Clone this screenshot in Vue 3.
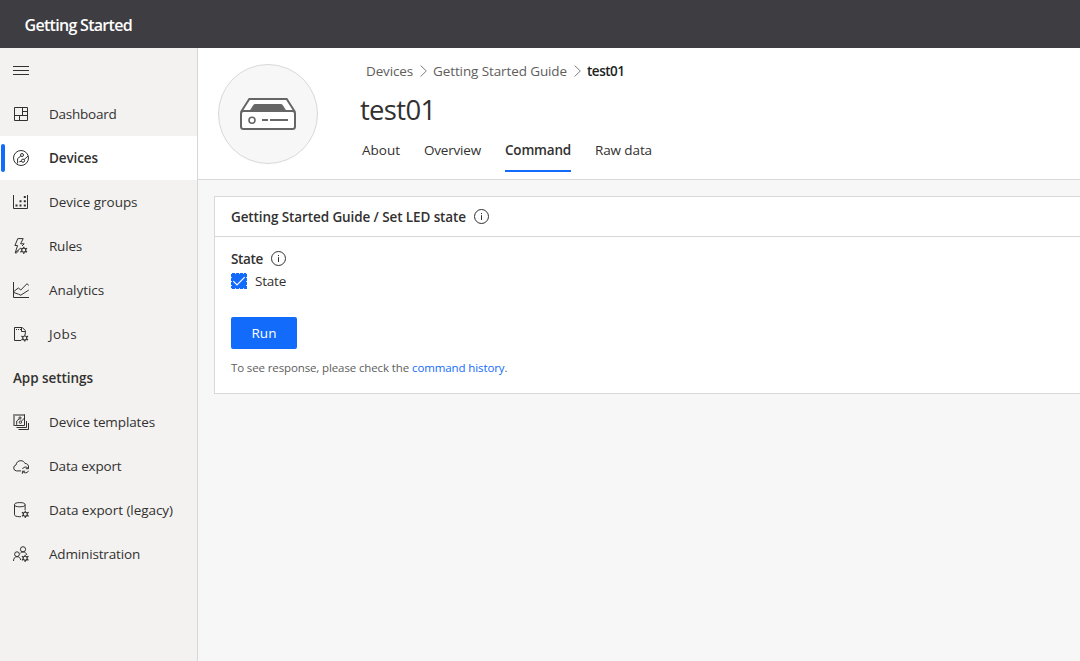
<script setup>
const nav = [
  { label: 'Dashboard', width: 67.5, icon: 'dashboard' },
  { label: 'Devices', width: 49, icon: 'devices', active: true },
  { label: 'Device groups', width: 88.5, icon: 'groups' },
  { label: 'Rules', width: 33, icon: 'rules' },
  { label: 'Analytics', width: 55, icon: 'analytics' },
  { label: 'Jobs', width: 28, icon: 'jobs' },
  { label: 'App settings', width: 80, heading: true },
  { label: 'Device templates', width: 106, icon: 'templates' },
  { label: 'Data export', width: 72.5, icon: 'export' },
  { label: 'Data export (legacy)', width: 124, icon: 'legacy' },
  { label: 'Administration', width: 91, icon: 'admin' },
]

const tabs = [
  { label: 'About', width: 38 },
  { label: 'Overview', width: 57 },
  { label: 'Command', width: 66, active: true },
  { label: 'Raw data', width: 57 },
]

// Tracks a label so that it fills the given width in pixels.
const vFit = {
  mounted(el, { value }) {
    el.style.display = 'inline-block'
    el.style.whiteSpace = 'nowrap'
    const natural = el.getBoundingClientRect().width
    el.style.letterSpacing = (value - natural) / el.textContent.length + 'px'
    el.style.width = value + 'px'
  },
}
</script>

<template>
  <div class="app">
    <svg class="defs" width="0" height="0" aria-hidden="true">
      <symbol id="gear" viewBox="0 0 7 7">
        <circle cx="3.5" cy="3.5" r="1.9" fill="none" stroke="currentColor" stroke-width="1.1" />
        <path d="M3.5 0v1.4M3.5 5.6V7M.3 1.65l1.4.8M5.3 4.55l1.4.8M.3 5.35l1.4-.8M5.3 2.45l1.4-.8" fill="none" stroke="currentColor" stroke-width="1.1" />
      </symbol>
    </svg>

    <header class="topbar"><span v-fit="107.5">Getting Started</span></header>

    <div class="body">
      <nav class="sidebar">
        <div class="row">
          <svg class="icon" viewBox="0 0 16 16"><path d="M0 4.5h16M0 8.5h16M0 12.5h16" /></svg>
        </div>
        <div v-for="item in nav" :key="item.label" class="row" :class="{ active: item.active, heading: item.heading }">
          <svg v-if="!item.heading" class="icon" viewBox="0 0 16 16">
            <g v-if="item.icon === 'dashboard'">
              <path d="M1.500 1.500h13v13h-13zM9.500 1.500v8M1.500 9.500h13M9.500 5.500h5M6.500 9.500v5" />
            </g>
            <g v-else-if="item.icon === 'devices'">
              <circle cx="8" cy="8" r="7.500" />
              <circle cx="9" cy="5" r="1.500" />
              <circle cx="10" cy="10.700" r="1.600" />
              <path d="M7.800 6L4.600 8.600v4.900M11.100 9.500l3.900-3.400M8.600 11.300l-2.300.4" />
            </g>
            <g v-else-if="item.icon === 'groups'">
              <path d="M.5 1v13.500h14V1" />
              <path class="solid" d="M2.500 10.500h2v2h-2zM6.500 10.500h2v2h-2zM10.800 10.500h2v2h-2zM6.500 6.300h2v2h-2zM10.800 6.300h2v2h-2zM10.800 2h2v2h-2z" />
            </g>
            <g v-else-if="item.icon === 'rules'">
              <path d="M4.800.6h5.400L7.600 5.800h3.600L9 8M4.800.6L1.900 7.500h2.700L2.200 14.900l5.100-4.600" />
              <path d="M2.200 14.900h1.300l2.300-2.200" />
              <use href="#gear" x="7" y="8.400" width="7.500" height="7.500" />
            </g>
            <g v-else-if="item.icon === 'analytics'">
              <path d="M.5 0v15.500H16M.8 9.500L5.300 6l2.500 2L14 1.700l2 2M.8 10.500l4.700 1.700 2.300 1L15.800 8" />
            </g>
            <g v-else-if="item.icon === 'jobs'">
              <path d="M8 14.500H1.500v-13h7.800l3 3v4M8.500 1.500v4h3.800M3 3.500h1M5 3.500h1M7 3.500h1" />
              <use href="#gear" x="8" y="8.300" width="7.500" height="7.500" />
            </g>
            <g v-else-if="item.icon === 'templates'">
              <path class="grey" d="M0 1h12M1 0v12" />
              <path d="M1.500 11.500h10v-11M3.500 13.500h10V7M5.500 15.500h10V9" />
              <circle cx="7" cy="4" r="1.100" /><circle cx="7.400" cy="8.200" r="1.200" />
              <path d="M6 5L3.700 7v3.800M8.300 7.200l2.700-2.600" />
            </g>
            <g v-else-if="item.icon === 'export'">
              <path d="M8 12.900H3.400a3 3 0 0 1-.4-5.900c.4-2.700 2.200-4.300 4.800-4.300 2 0 3.400 1 4.200 2.800 2 0 3.300 1 3.400 2.700" />
              <path d="M9.500 11a3.200 3.200 0 0 1 5.600-.6M15.500 8v2.700h-2.700M15.500 12.800a3.200 3.200 0 0 1-5.700.6M9.400 15.800v-2.600h2.700" />
            </g>
            <g v-else-if="item.icon === 'legacy'">
              <ellipse cx="6.800" cy="2.700" rx="5.300" ry="2.100" />
              <path d="M1.500 2.700v10c0 1.200 1.900 1.900 4.800 2H8M12.100 2.700v5.500" />
              <use href="#gear" x="8.500" y="8.500" width="7.500" height="7.500" />
            </g>
            <g v-else-if="item.icon === 'admin'">
              <circle cx="10" cy="3.300" r="2.600" />
              <circle cx="4" cy="8.200" r="2.400" />
              <path d="M.5 15c0-2.700 1.300-4.300 3.500-4.300S7.400 12 7.700 14M7.400 7.200c.8-.9 1.600-1.300 2.600-1.300 2 0 3.300 1.100 3.800 3" />
              <use href="#gear" x="8.400" y="8.500" width="7.500" height="7.500" />
            </g>
          </svg>
          <span v-fit="item.width">{{ item.label }}</span>
        </div>
      </nav>

      <main class="main">
        <section class="hero">
          <div class="avatar">
            <svg width="56" height="32" viewBox="0 0 56 32">
              <path d="M1 14L9.300 1h37.400L55 14" fill="#fff" stroke="#666" stroke-width="2" />
              <path d="M15 6h26q1.500 0 2 1.500L46.500 13h-37L13 7.500Q13.500 6 15 6z" fill="#666" />
              <rect x="1" y="13" width="54" height="18" rx="2.500" fill="#fff" stroke="#666" stroke-width="2" />
              <circle cx="12" cy="22.300" r="3" fill="none" stroke="#666" stroke-width="1.600" />
              <path d="M22 22h6M30 22h18" stroke="#666" stroke-width="2" />
            </svg>
          </div>
          <div class="details">
            <div class="crumbs">
              <span v-fit="47">Devices</span>
              <svg class="chevron" width="7" height="12" viewBox="0 0 7 12"><path d="M.6.5L6.300 6 .6 11.500" /></svg>
              <span v-fit="134">Getting Started Guide</span>
              <svg class="chevron" width="7" height="12" viewBox="0 0 7 12"><path d="M.6.5L6.300 6 .6 11.500" /></svg>
              <b v-fit="37.500">test01</b>
            </div>
            <h1><span v-fit="75.500">test01</span></h1>
            <div class="tabs">
              <div v-for="tab in tabs" :key="tab.label" class="tab" :class="{ active: tab.active }">
                <span v-fit="tab.width">{{ tab.label }}</span>
              </div>
            </div>
          </div>
        </section>

        <section class="card">
          <div class="card-head">
            <span v-fit="235">Getting Started Guide / Set LED state</span>
            <svg class="info" viewBox="0 0 15 15"><circle cx="7.500" cy="7.500" r="7" /><path d="M7.500 6.200V11M7.500 4v1.100" /></svg>
          </div>
          <div class="card-body">
            <div class="field-label">
              <span v-fit="32">State</span>
              <svg class="info" viewBox="0 0 15 15"><circle cx="7.500" cy="7.500" r="7" /><path d="M7.500 6.200V11M7.500 4v1.100" /></svg>
            </div>
            <div class="check">
              <svg width="16" height="16" viewBox="0 0 16 16">
                <rect width="16" height="16" fill="#136bfb" />
                <path d="M0 .5h16M0 15.500h16M.5 0v16M15.500 0v16" fill="none" stroke="#fff" stroke-opacity=".8" stroke-dasharray="1 3" />
                <path d="M2.300 8.200l3.700 3.700 7.700-7.700" fill="none" stroke="#fff" stroke-width="1.200" />
              </svg>
              <span v-fit="31">State</span>
            </div>
            <button class="run"><span v-fit="25">Run</span></button>
            <p class="note"><span v-fit="178">To see response, please check the</span><a v-fit="92.500">command history</a><span>.</span></p>
          </div>
        </section>
      </main>
    </div>
  </div>
</template>

<style>
body { margin: 0; overflow: hidden; }
</style>

<style scoped>
.app {
  display: flex;
  flex-direction: column;
  width: 1080px;
  height: 661px;
  overflow: hidden;
  font: 13.5px/20px "Open Sans", "Noto Sans", sans-serif;
  color: #323130;
}
.app * { box-sizing: border-box; }
.defs { position: absolute; }
.topbar {
  display: flex;
  align-items: center;
  flex: none;
  height: 48px;
  padding: 2px 0 0 24.5px;
  background: #3e3d42;
  color: #fff;
  font-size: 16px;
  font-weight: 600;
}
.body { display: flex; flex: 1; min-height: 0; }
.sidebar {
  flex: none;
  width: 198px;
  background: #f3f2f1;
  border-right: 1px solid #d8d8d8;
}
.row {
  position: relative;
  display: flex;
  align-items: center;
  gap: 20px;
  height: 44px;
  padding-left: 13px;
}
.row.active { background: #fff; font-weight: 600; }
.row.active::before {
  content: "";
  position: absolute;
  left: 1px;
  top: 8px;
  width: 4px;
  height: 28px;
  border-radius: 2px;
  background: #136bfb;
}
.row.heading { font-weight: 600; }
.icon {
  flex: none;
  width: 16px;
  height: 16px;
  fill: none;
  stroke: currentColor;
  stroke-width: 1;
}
.icon .solid { fill: currentColor; stroke: none; }
.icon .grey { stroke: #8c8b8a; stroke-width: 2; }
.main { flex: 1; min-width: 0; overflow: hidden; background: #f7f7f7; }
.hero {
  display: flex;
  gap: 42px;
  height: 132px;
  padding: 16px 0 0 20px;
  background: #fff;
  border-bottom: 1px solid #d8d8d8;
}
.avatar {
  display: flex;
  align-items: center;
  justify-content: center;
  width: 100px;
  height: 100px;
  border: 1px solid #d8d8d8;
  border-radius: 50%;
  background: #f7f7f7;
}
.details { display: flex; flex-direction: column; }
.crumbs {
  display: flex;
  align-items: center;
  height: 14px;
  padding-left: 6px;
  color: #605e5c;
}
.crumbs b { color: #201f1e; font-weight: 600; }
.chevron { margin: 0 6px 0 7px; fill: none; stroke: #807e7c; }
h1 {
  margin: 12px 0 0;
  font-size: 27.5px;
  line-height: 40px;
  font-weight: 400;
}
.tabs { display: flex; gap: 24px; padding-left: 2px; margin-top: 8px; }
.tab { height: 34px; padding-top: 2px; border-bottom: 2px solid transparent; }
.tab.active { font-weight: 600; border-color: #136bfb; }
.card {
  width: 900px;
  height: 198px;
  margin: 16px 0 0 16px;
  background: #fff;
  border: 1px solid #d8d8d8;
}
.card-head {
  display: flex;
  align-items: center;
  gap: 8px;
  height: 40px;
  padding-left: 16px;
  border-bottom: 1px solid #d8d8d8;
  font-weight: 600;
}
.info { width: 15px; height: 15px; fill: none; stroke: #323130; }
.card-body { padding: 12px 16px; }
.field-label { display: flex; align-items: center; gap: 8px; height: 20px; font-weight: 600; }
.field-label .info { margin-bottom: 1px; }
.check { display: flex; align-items: center; gap: 8px; height: 24px; }
.run {
  display: block;
  width: 66px;
  height: 32px;
  margin-top: 24px;
  padding: 0;
  border: 0;
  border-radius: 2px;
  background: #136bfb;
  color: #fff;
  font: inherit;
  text-align: center;
}
.note {
  display: flex;
  margin: 9px 0 0;
  color: #605e5c;
  font-size: 11.5px;
}
.note a { margin-left: 3px; color: #136bfb; }
</style>
